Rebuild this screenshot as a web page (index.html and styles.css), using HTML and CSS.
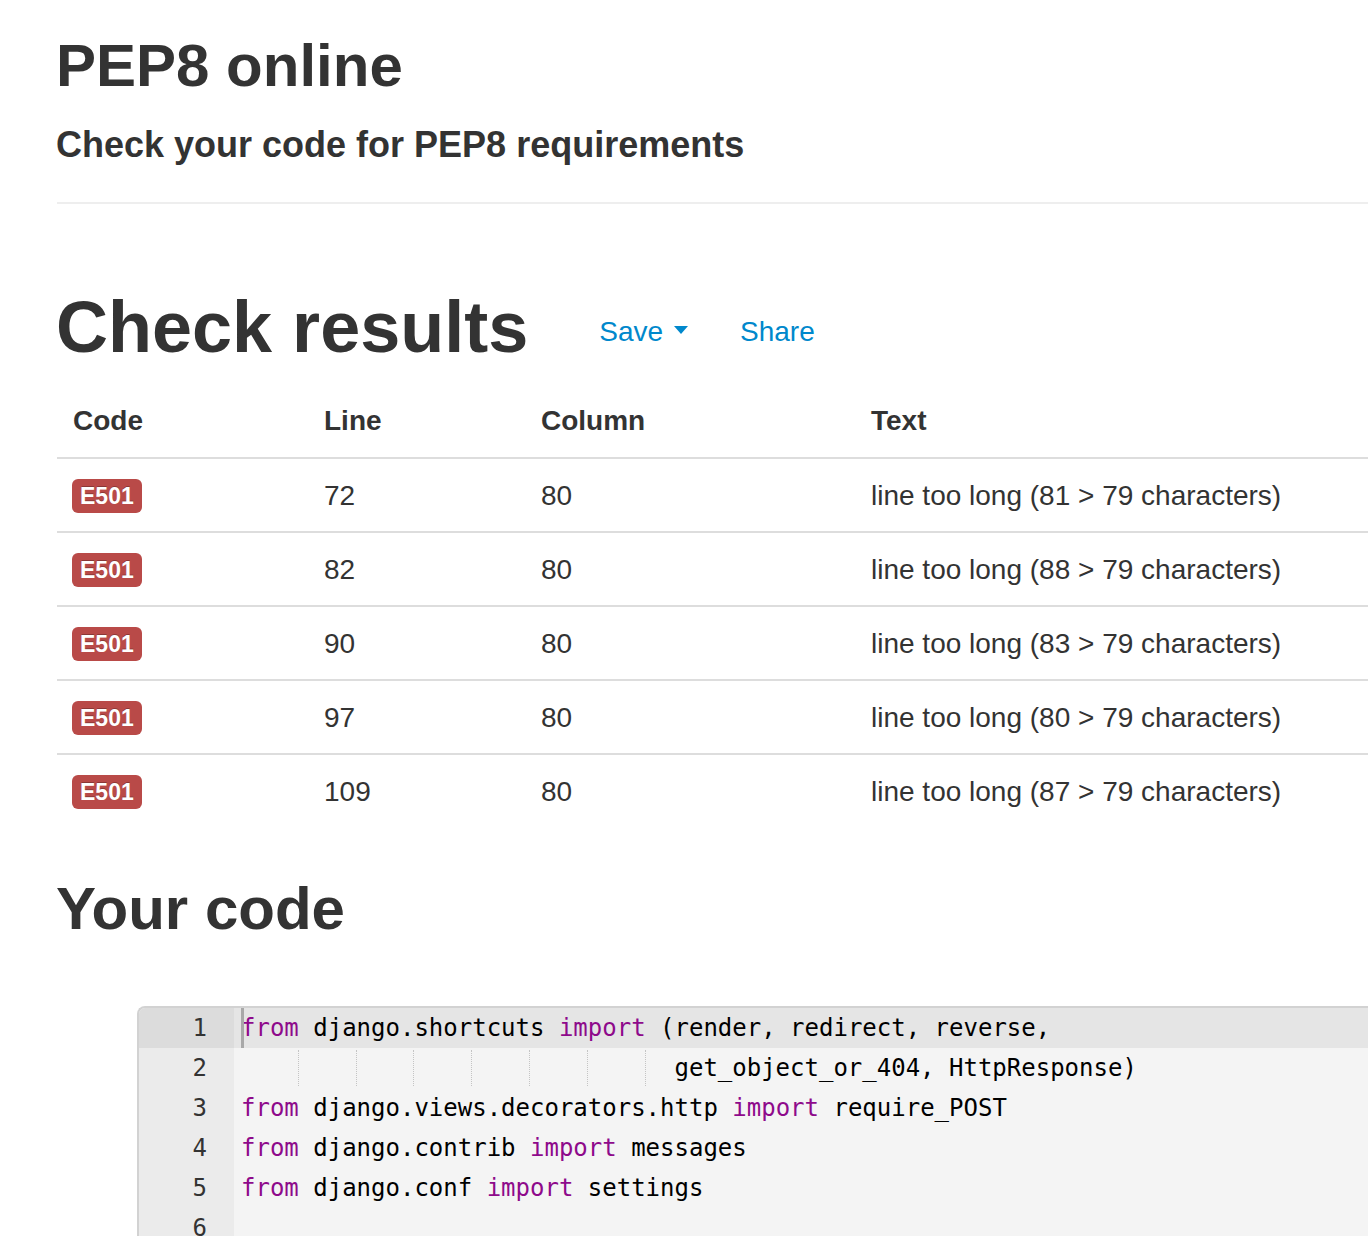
FILE: index.html
```html
<!DOCTYPE html>
<html lang="en">
<head>
<meta charset="utf-8">
<title>PEP8 online</title>
<link rel="stylesheet" href="styles.css">
</head>
<body>
<div class="page">
  <div class="container">
    <header class="page-header">
      <h1 class="site-title">PEP8 online</h1>
      <h3 class="site-subtitle">Check your code for PEP8 requirements</h3>
    </header>

    <section class="results">
      <div class="results-head">
        <h1 class="results-title">Check results</h1>
        <nav class="results-actions">
          <a class="action" href="#">Save<span class="caret"></span></a>
          <a class="action" href="#">Share</a>
        </nav>
      </div>

      <table class="results-table">
        <colgroup>
          <col class="col-code">
          <col class="col-line">
          <col class="col-column">
          <col class="col-text">
        </colgroup>
        <thead>
          <tr><th>Code</th><th>Line</th><th>Column</th><th>Text</th></tr>
        </thead>
        <tbody>
          <tr><td><span class="label">E501</span></td><td>72</td><td>80</td><td>line too long (81 &gt; 79 characters)</td></tr>
          <tr><td><span class="label">E501</span></td><td>82</td><td>80</td><td>line too long (88 &gt; 79 characters)</td></tr>
          <tr><td><span class="label">E501</span></td><td>90</td><td>80</td><td>line too long (83 &gt; 79 characters)</td></tr>
          <tr><td><span class="label">E501</span></td><td>97</td><td>80</td><td>line too long (80 &gt; 79 characters)</td></tr>
          <tr><td><span class="label">E501</span></td><td>109</td><td>80</td><td>line too long (87 &gt; 79 characters)</td></tr>
        </tbody>
      </table>
    </section>

    <section class="source">
      <h2 class="source-title">Your code</h2>
      <div class="editor">
        <div class="cm-line active">
          <div class="gutter">1</div>
          <div class="code"><span class="kw">from</span> django.shortcuts <span class="kw">import</span> (render, redirect, reverse,</div>
        </div>
        <div class="cm-line">
          <div class="gutter">2</div>
          <div class="code"><span class="indent"></span><span class="indent"></span><span class="indent"></span><span class="indent"></span><span class="indent"></span><span class="indent"></span><span class="indent"></span>  get_object_or_404, HttpResponse)</div>
        </div>
        <div class="cm-line">
          <div class="gutter">3</div>
          <div class="code"><span class="kw">from</span> django.views.decorators.http <span class="kw">import</span> require_POST</div>
        </div>
        <div class="cm-line">
          <div class="gutter">4</div>
          <div class="code"><span class="kw">from</span> django.contrib <span class="kw">import</span> messages</div>
        </div>
        <div class="cm-line">
          <div class="gutter">5</div>
          <div class="code"><span class="kw">from</span> django.conf <span class="kw">import</span> settings</div>
        </div>
        <div class="cm-line">
          <div class="gutter">6</div>
          <div class="code"></div>
        </div>
      </div>
    </section>
  </div>
</div>
</body>
</html>
```

FILE: styles.css
```css
html, body {
  margin: 0;
  padding: 0;
  background: #fff;
  overflow: hidden;
}

body {
  font-family: "Liberation Sans", Arial, Helvetica, sans-serif;
  font-size: 28px;
  line-height: 40px;
  color: #333;
}

.page {
  width: 1368px;
  height: 1236px;
  overflow: hidden;
}

.container {
  margin-left: 56px;
  width: 1500px;
}

/* header */
.page-header {
  padding-top: 33px;
}

.site-title {
  margin: 0;
  font-size: 60px;
  line-height: 66px;
  font-weight: bold;
  color: #333;
}

.site-subtitle {
  margin: 26px 0 0;
  font-size: 36px;
  line-height: 40px;
  font-weight: bold;
  color: #333;
}

.page-header::after {
  content: "";
  display: block;
  margin-top: 37px;
  margin-left: 1px;
  border-top: 2px solid #eee;
}

/* results */
.results {
  margin-top: 83px;
}

.results-head {
  display: flex;
  align-items: flex-start;
}

.results-title {
  margin: 0;
  font-size: 72px;
  line-height: 80px;
  font-weight: bold;
  color: #333;
}

.results-actions {
  display: flex;
  gap: 52px;
  margin-left: 71px;
  margin-top: 25px;
}

.action {
  color: #0088cc;
  text-decoration: none;
  font-size: 28px;
  line-height: 40px;
}

.caret {
  display: inline-block;
  width: 0;
  height: 0;
  margin-left: 11px;
  vertical-align: 7px;
  border-top: 8px solid #0088cc;
  border-left: 7px solid transparent;
  border-right: 7px solid transparent;
}

.results-table {
  margin-top: 18px;
  margin-left: 1px;
  width: 1500px;
  border-collapse: separate;
  border-spacing: 0;
  table-layout: fixed;
}

.col-code { width: 251px; }
.col-line { width: 217px; }
.col-column { width: 330px; }

.results-table th,
.results-table td {
  padding: 16px;
  line-height: 40px;
  text-align: left;
  vertical-align: top;
  font-size: 28px;
}

.results-table th {
  font-weight: bold;
  border-bottom: 2px solid #ddd;
}

.results-table td {
  border-top: 2px solid #ddd;
  padding-top: 17px;
  padding-bottom: 15px;
}

.results-table tbody tr:first-child td {
  border-top: 0;
}

.results-table td:first-child {
  padding-left: 15px;
}

.label {
  display: inline-block;
  padding: 3px 8px;
  font-size: 23px;
  line-height: 28px;
  font-weight: bold;
  color: #fff;
  background: #b94a48;
  border-radius: 6px;
  text-shadow: 0 -1px 0 rgba(0, 0, 0, 0.25);
  vertical-align: 1px;
}

/* source */
.source-title {
  margin: 49px 0 0;
  font-size: 60px;
  line-height: 66px;
  font-weight: bold;
  color: #333;
}

.editor {
  margin: 64px 0 0 81px;
  border: 2px solid #d2d2d2;
  border-right: 0;
  border-bottom: 0;
  border-radius: 8px 0 0 0;
  background: #f4f4f4;
  overflow: hidden;
  font-family: "DejaVu Sans Mono", "Liberation Mono", monospace;
  font-size: 24px;
  line-height: 40px;
}

.cm-line {
  display: flex;
  height: 40px;
}

.gutter {
  flex: 0 0 95px;
  box-sizing: border-box;
  padding-right: 27px;
  text-align: right;
  background: #ebebeb;
  color: #333;
}

.code {
  position: relative;
  flex: 1;
  padding-left: 7px;
  white-space: pre;
  color: #000;
}

.cm-line.active .gutter {
  background: #dcdcdc;
}

.cm-line.active .code {
  background: #e5e5e5;
}

.cm-line.active .code::before {
  content: "";
  position: absolute;
  left: 7px;
  top: 0;
  width: 3px;
  height: 40px;
  background: #a8a8a8;
}

.kw {
  color: #8e0a8b;
}

.indent {
  display: inline-block;
  box-sizing: border-box;
  width: 4ch;
  height: 36px;
  vertical-align: top;
  margin-top: 2px;
  border-right: 1px dotted #c4c4c4;
}
```
